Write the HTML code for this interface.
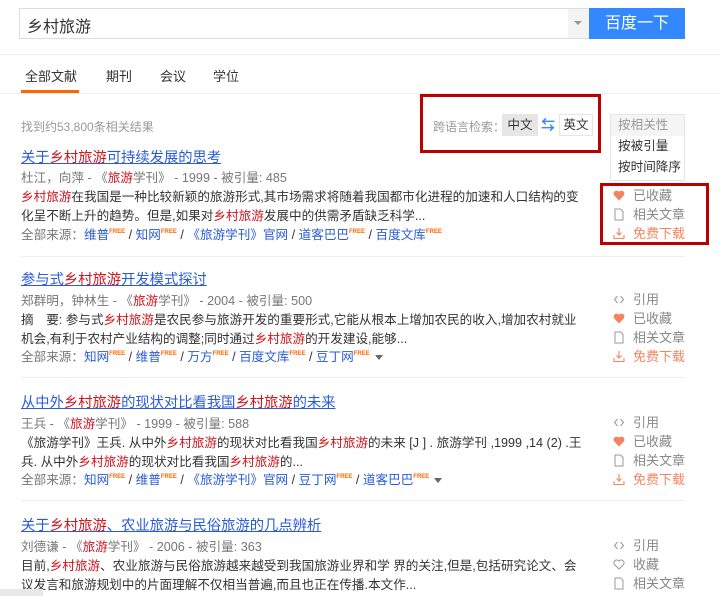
<!DOCTYPE html>
<html><head><meta charset="utf-8"><style>
*{margin:0;padding:0;box-sizing:border-box}
body{width:720px;height:596px;overflow:hidden;background:#fff;font-family:"Liberation Sans","Noto Sans CJK SC",sans-serif;font-size:12.6px;color:#333;position:relative}
.a{position:absolute;white-space:nowrap}
.t{font-size:14.3px;color:#2a5bd7;text-decoration:underline}
.r{color:#d0121b}
.m{color:#777}
.l{color:#2a5bd7}
sup{font-size:6px;color:#f60;vertical-align:6px;font-weight:bold}
.act{position:absolute;left:613px;color:#888;font-size:13px;line-height:19px}
.act div{height:19px;display:flex;align-items:center}
.act svg{width:12px;height:13px;margin-right:8px}
.dl{color:#f4845f}
.sep{position:absolute;left:21px;width:664px;height:1px;background:#eee}
.caret{display:inline-block;border:4px solid transparent;border-top:5px solid #666;vertical-align:-3px;margin-left:5px}
</style></head><body>
<svg width="0" height="0" style="position:absolute"><defs>
<symbol id="heart" viewBox="0 0 12 12"><path d="M6 11 L1.2 6 A2.8 2.8 0 0 1 6 2.3 A2.8 2.8 0 0 1 10.8 6 Z" fill="#f4845f"/></symbol>
<symbol id="heartO" viewBox="0 0 12 12"><path d="M6 10.5 L1.5 6 A2.6 2.6 0 0 1 6 2.6 A2.6 2.6 0 0 1 10.5 6 Z" fill="none" stroke="#999" stroke-width="1"/></symbol>
<symbol id="doc" viewBox="0 0 12 13"><path d="M2 1 H7.5 L10 3.5 V12 H2 Z" fill="none" stroke="#999" stroke-width="1"/></symbol>
<symbol id="dl" viewBox="0 0 12 13"><path d="M6 1 V8 M3.5 5.5 L6 8 L8.5 5.5 M1 8 V11.5 H11 V8" fill="none" stroke="#f4845f" stroke-width="1.1"/></symbol>
<symbol id="cite" viewBox="0 0 12 12"><path d="M4.5 2.5 L1.5 6 L4.5 9.5 M7.5 2.5 L10.5 6 L7.5 9.5" fill="none" stroke="#999" stroke-width="1"/></symbol>
</defs></svg>
<div class="a" style="left:19px;top:8px;width:570px;height:31px;border:1px solid #ddd;background:#fff"></div>
<div class="a" style="left:568px;top:9px;width:21px;height:29px;background:#f3f3f3"></div>
<div class="a" style="left:574px;top:21px;border:4px solid transparent;border-top:4px solid #999"></div>
<div class="a" style="left:27px;top:13px;font-size:16px;color:#333">乡村旅游</div>
<div class="a" style="left:589px;top:8px;width:96px;height:31px;background:#3388ff;color:#fff;font-size:16px;text-align:center;line-height:31px">百度一下</div>
<div class="a" style="left:0;top:54px;width:720px;height:1px;background:#eee"></div>
<div class="a" style="left:25px;top:66px;font-size:13px">全部文献</div>
<div class="a" style="left:106px;top:66px;font-size:13px">期刊</div>
<div class="a" style="left:160px;top:66px;font-size:13px">会议</div>
<div class="a" style="left:213px;top:66px;font-size:13px">学位</div>
<div class="a" style="left:21px;top:90px;width:58px;height:3px;background:#f60"></div>
<div class="a" style="left:0;top:93px;width:720px;height:1px;background:#eee"></div>
<div class="a m" style="left:21px;top:118px;font-size:12px;color:#999">找到约53,800条相关结果</div>
<div class="a" style="left:420px;top:94px;width:181px;height:59px;border:3px solid #b00"></div>
<div class="a" style="left:433px;top:118px;font-size:12px;color:#999">跨语言检索：</div>
<div class="a" style="left:502px;top:114px;width:36px;height:22px;background:#e6e6e6;text-align:center;line-height:22px">中文</div>
<div class="a" style="left:541px;top:115px;color:#3388ff;font-size:14px;font-weight:bold">⇆</div>
<div class="a" style="left:559px;top:114px;width:34px;height:22px;border:1px solid #e6e6e6;text-align:center;line-height:20px">英文</div>
<div class="a" style="left:610px;top:114px;width:75px;height:67px;border:1px solid #e6e6e6;line-height:21px;padding-left:7px">
<div style="color:#999;background:#f5f5f5;margin-left:-7px;padding-left:7px">按相关性</div><div>按被引量</div><div>按时间降序</div></div>
<div class="a" style="left:600px;top:183px;width:109px;height:62px;border:3px solid #b00"></div>

<div class="a t" style="left:21px;top:146px"><span>关于</span><span class="r">乡村旅游</span>可持续发展的思考</div>
<div class="a m" style="left:21px;top:167px">杜江，向萍 - 《<span class="r">旅游</span>学刊》 - 1999 - 被引量: 485</div>
<div class="a" style="left:21px;top:186px"><span class="r">乡村旅游</span>在我国是一种比较新颖的旅游形式,其市场需求将随着我国都市化进程的加速和人口结构的变</div>
<div class="a" style="left:21px;top:205px">化呈不断上升的趋势。但是,如果对<span class="r">乡村旅游</span>发展中的供需矛盾缺乏科学...</div>
<div class="a" style="left:21px;top:224px"><span class="m">全部来源：</span><span class="l">维普</span><sup>FREE</sup> / <span class="l">知网</span><sup>FREE</sup> / <span class="l">《旅游学刊》官网</span> / <span class="l">道客巴巴</span><sup>FREE</sup> / <span class="l">百度文库</span><sup>FREE</sup></div>
<div class="act" style="top:186px"><div><svg><use href="#heart"/></svg>已收藏</div><div><svg><use href="#doc"/></svg>相关文章</div><div class="dl"><svg><use href="#dl"/></svg>免费下载</div></div>
<div class="sep" style="top:256px"></div>

<div class="a t" style="left:21px;top:268px">参与式<span class="r">乡村旅游</span>开发模式探讨</div>
<div class="a m" style="left:21px;top:290px">郑群明，钟林生 - 《<span class="r">旅游</span>学刊》 - 2004 - 被引量: 500</div>
<div class="a" style="left:21px;top:309px">摘　要: 参与式<span class="r">乡村旅游</span>是农民参与旅游开发的重要形式,它能从根本上增加农民的收入,增加农村就业</div>
<div class="a" style="left:21px;top:328px">机会,有利于农村产业结构的调整;同时通过<span class="r">乡村旅游</span>的开发建设,能够...</div>
<div class="a" style="left:21px;top:346px"><span class="m">全部来源：</span><span class="l">知网</span><sup>FREE</sup> / <span class="l">维普</span><sup>FREE</sup> / <span class="l">万方</span><sup>FREE</sup> / <span class="l">百度文库</span><sup>FREE</sup> / <span class="l">豆丁网</span><sup>FREE</sup><span class="caret"></span></div>
<div class="act" style="top:290px"><div><svg><use href="#cite"/></svg>引用</div><div><svg><use href="#heart"/></svg>已收藏</div><div><svg><use href="#doc"/></svg>相关文章</div><div class="dl"><svg><use href="#dl"/></svg>免费下载</div></div>
<div class="sep" style="top:377px"></div>

<div class="a t" style="left:21px;top:391px">从中外<span class="r">乡村旅游</span>的现状对比看我国<span class="r">乡村旅游</span>的未来</div>
<div class="a m" style="left:21px;top:413px">王兵 - 《<span class="r">旅游</span>学刊》 - 1999 - 被引量: 588</div>
<div class="a" style="left:21px;top:432px">《旅游学刊》王兵. 从中外<span class="r">乡村旅游</span>的现状对比看我国<span class="r">乡村旅游</span>的未来 [J ] . 旅游学刊 ,1999 ,14 (2) .王</div>
<div class="a" style="left:21px;top:451px">兵. 从中外<span class="r">乡村旅游</span>的现状对比看我国<span class="r">乡村旅游</span>的...</div>
<div class="a" style="left:21px;top:469px"><span class="m">全部来源：</span><span class="l">知网</span><sup>FREE</sup> / <span class="l">维普</span><sup>FREE</sup> / <span class="l">《旅游学刊》官网</span> / <span class="l">豆丁网</span><sup>FREE</sup> / <span class="l">道客巴巴</span><sup>FREE</sup><span class="caret"></span></div>
<div class="act" style="top:413px"><div><svg><use href="#cite"/></svg>引用</div><div><svg><use href="#heart"/></svg>已收藏</div><div><svg><use href="#doc"/></svg>相关文章</div><div class="dl"><svg><use href="#dl"/></svg>免费下载</div></div>
<div class="sep" style="top:500px"></div>

<div class="a t" style="left:21px;top:514px">关于<span class="r">乡村旅游</span>、农业旅游与民俗旅游的几点辨析</div>
<div class="a m" style="left:21px;top:536px">刘德谦 - 《<span class="r">旅游</span>学刊》 - 2006 - 被引量: 363</div>
<div class="a" style="left:21px;top:555px">目前,<span class="r">乡村旅游</span>、农业旅游与民俗旅游越来越受到我国旅游业界和学 界的关注,但是,包括研究论文、会</div>
<div class="a" style="left:21px;top:574px">议发言和旅游规划中的片面理解不仅相当普遍,而且也正在传播.本文作...</div>
<div class="act" style="top:536px"><div><svg><use href="#cite"/></svg>引用</div><div><svg><use href="#heartO"/></svg>收藏</div><div><svg><use href="#doc"/></svg>相关文章</div></div>
<div class="a" style="left:0;top:589px;width:43px;height:7px;background:#e8e8e8"></div>
</body></html>
